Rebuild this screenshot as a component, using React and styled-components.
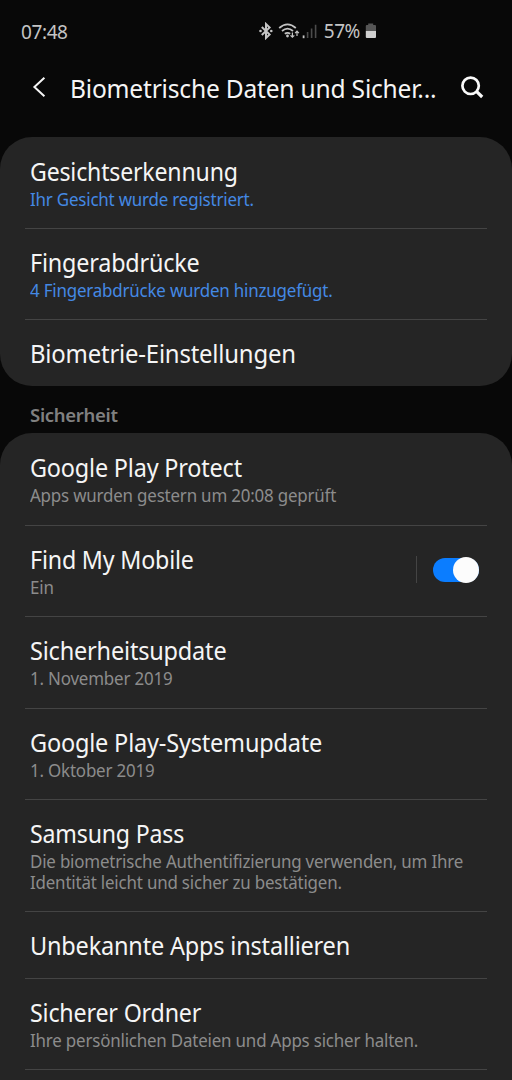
import React from 'react';
import styled, { createGlobalStyle } from 'styled-components';

const cards = [
    {
        rows: [
            { title: 'Gesichtserkennung', stretch: 0.924, lines: ['Ihr Gesicht wurde registriert.'], blue: true, height: 91 },
            { title: 'Fingerabdrücke', stretch: 0.935, lines: ['4 Fingerabdrücke wurden hinzugefügt.'], blue: true, height: 91 },
            { title: 'Biometrie-Einstellungen', stretch: 0.955, height: 67 },
        ],
    },
    {
        label: 'Sicherheit',
        rows: [
            { title: 'Google Play Protect', stretch: 0.937, lines: ['Apps wurden gestern um 20:08 geprüft'], height: 92 },
            { title: 'Find My Mobile', stretch: 0.93, lines: ['Ein'], toggle: true, height: 91 },
            { title: 'Sicherheitsupdate', lines: ['1. November 2019'], height: 92 },
            { title: 'Google Play-Systemupdate', lines: ['1. Oktober 2019'], height: 91 },
            {
                title: 'Samsung Pass',
                stretch: 0.925,
                lines: ['Die biometrische Authentifizierung verwenden, um Ihre', 'Identität leicht und sicher zu bestätigen.'],
                height: 112,
            },
            { title: 'Unbekannte Apps installieren', height: 67 },
            { title: 'Sicherer Ordner', stretch: 0.93, lines: ['Ihre persönlichen Dateien und Apps sicher halten.'], height: 91 },
            { title: '', height: 60 },
        ],
    },
];

function StatusIcons(){
    return(
        <Icons>
            <svg width="58" height="18" viewBox="0 0 58 18" fill="none" stroke="#c4c4c4">
                <path d="M2.8 5 10.6 12.6 7 16V2l3.6 3.4-7.8 7.6" strokeWidth="2" />
                <circle cx="1.5" cy="9" r="1.3" fill="#c4c4c4" stroke="none" />
                <circle cx="12.3" cy="9" r="1.3" fill="#c4c4c4" stroke="none" />
                <path d="M20.2 6Q28.5 -1.2 36.8 6M23 9Q28.5 4.2 34 9M25.8 11.8Q28.5 9.8 31.2 11.8" strokeWidth="1.8" />
                <circle cx="28.5" cy="14" r="1.4" fill="#c4c4c4" stroke="none" />
                <path d="M33.4 10.4v4.8m-1.9-1.9 1.9 1.9 1.9-1.9M38 14V9.2m-1.9 1.9L38 9.2l1.9 1.9" strokeWidth="1.2" />
                <path d="M44.6 13.4v2.8" strokeWidth="1.8" />
                <path d="M48.6 10v6M52.6 6.4V16M56.6 2.8V16" stroke="#4c4c4c" strokeWidth="1.6" />
            </svg>
            <StatusText>57%</StatusText>
            <svg width="12" height="16" viewBox="0 0 12 16">
                <path d="M3.2 0.5h5V2H10q1 0 1 1v5H.8V3q0-1 1-1h1.4z" fill="#555" />
                <path d="M.8 8H11v6q0 1-1 1H1.8q-1 0-1-1z" fill="#cfcfcf" />
            </svg>
        </Icons>
    )
}

function Row({ title, stretch, lines, blue, toggle, height }){
    return(
        <RowContainer $height={height}>
            <RowText>
                <RowTitle $stretch={stretch}>{title}</RowTitle>
                {lines && (
                    <RowSummary $blue={blue}>
                        {lines.map((line) => <span key={line}>{line}</span>)}
                    </RowSummary>
                )}
            </RowText>
            {toggle && (
                <ToggleArea>
                    <Track role="switch" aria-checked="true"><Thumb /></Track>
                </ToggleArea>
            )}
        </RowContainer>
    )
}

function App(){
    return(
        <Screen>
            <GlobalStyle />
            <StatusBar>
                <StatusText>07:48</StatusText>
                <StatusIcons />
            </StatusBar>
            <Header>
                <svg width="14" height="22" viewBox="0 0 14 22" fill="none" stroke="#f5f5f5" strokeWidth="2">
                    <path d="M12.4 .8 2.4 10l10 9.2" />
                </svg>
                <Heading>Biometrische Daten und Sicher...</Heading>
                <svg width="24" height="24" viewBox="0 0 24 24" fill="none" stroke="#fafafa">
                    <circle cx="10.6" cy="9.8" r="8.2" strokeWidth="2.7" />
                    <path d="m16.2 15.2 6 5.8" strokeWidth="3.2" />
                </svg>
            </Header>
            {cards.map((card, i) => (
                <React.Fragment key={i}>
                    {card.label && <SectionLabel>{card.label}</SectionLabel>}
                    <Card>
                        {card.rows.map((row) => <Row key={row.title} {...row} />)}
                    </Card>
                </React.Fragment>
            ))}
        </Screen>
    )
}

export default App;

const GlobalStyle = createGlobalStyle`
    body{
        margin:0;
        background:#080808;
        overflow:hidden;
    }
`
const Screen = styled.main`
    width:512px;
    height:1080px;
    overflow:hidden;
    background:#080808;
    color:#f5f5f5;
    font-family:"Noto Sans", sans-serif;
    white-space:nowrap;

    svg{
        display:block;
        flex:none;
    }
`
const StatusBar = styled.div`
    display:flex;
    justify-content:space-between;
    height:62px;
    padding:0 135px 0 21px;
    box-sizing:border-box;
`
const StatusText = styled.span`
    font-size:19px;
    line-height:64px;
    color:#c4c4c4;
    letter-spacing:-0.4px;
`
const Icons = styled.div`
    display:flex;
    align-items:center;
    height:62px;
    gap:7px;

    svg + span + svg{
        margin-left:-2px;
    }
`
const Header = styled.header`
    display:flex;
    align-items:center;
    height:75px;
    padding:0 28px 24px 32px;
    box-sizing:border-box;
`
const Heading = styled.h1`
    flex:1;
    width:0;
    margin:0 0 0 24px;
    font-size:26px;
    font-weight:400;
    line-height:34px;
    letter-spacing:-0.2px;
    transform:scaleX(0.944);
    transform-origin:left;
`
const Card = styled.section`
    border-radius:32px;
    background:#252525;
    padding:0 25px;
`
const SectionLabel = styled.h2`
    height:47px;
    margin:0;
    padding-left:30px;
    font-size:18.5px;
    font-weight:600;
    line-height:58px;
    color:#808080;
    letter-spacing:-0.3px;
`
const RowContainer = styled.div`
    display:flex;
    height:${(props) => props.$height}px;
    padding:17px 8px 0 5px;
    box-sizing:border-box;

    & + &{
        padding-top:16px;
        border-top:1px solid #444;
    }
`
const RowText = styled.div`
    flex:1;
`
const RowTitle = styled.div`
    font-size:25px;
    line-height:35px;
    letter-spacing:-0.2px;
    transform:scaleX(${(props) => props.$stretch || 0.94});
    transform-origin:left;
`
const RowSummary = styled.div`
    display:flex;
    flex-direction:column;
    font-size:18px;
    line-height:21px;
    letter-spacing:-0.2px;
    color:${(props) => props.$blue ? '#4489e4' : '#8c8c8c'};
    transform:scaleX(0.94);
    transform-origin:left;
`
const ToggleArea = styled.div`
    display:flex;
    align-items:center;
    height:27px;
    margin-top:14px;
    padding-left:16px;
    border-left:1px solid #444;
`
const Track = styled.div`
    display:flex;
    align-items:center;
    justify-content:flex-end;
    width:46px;
    height:24px;
    border-radius:12px;
    background:#0b7dff;
`
const Thumb = styled.div`
    width:26px;
    height:26px;
    flex:none;
    border-radius:50%;
    background:#fcfcfc;
`
